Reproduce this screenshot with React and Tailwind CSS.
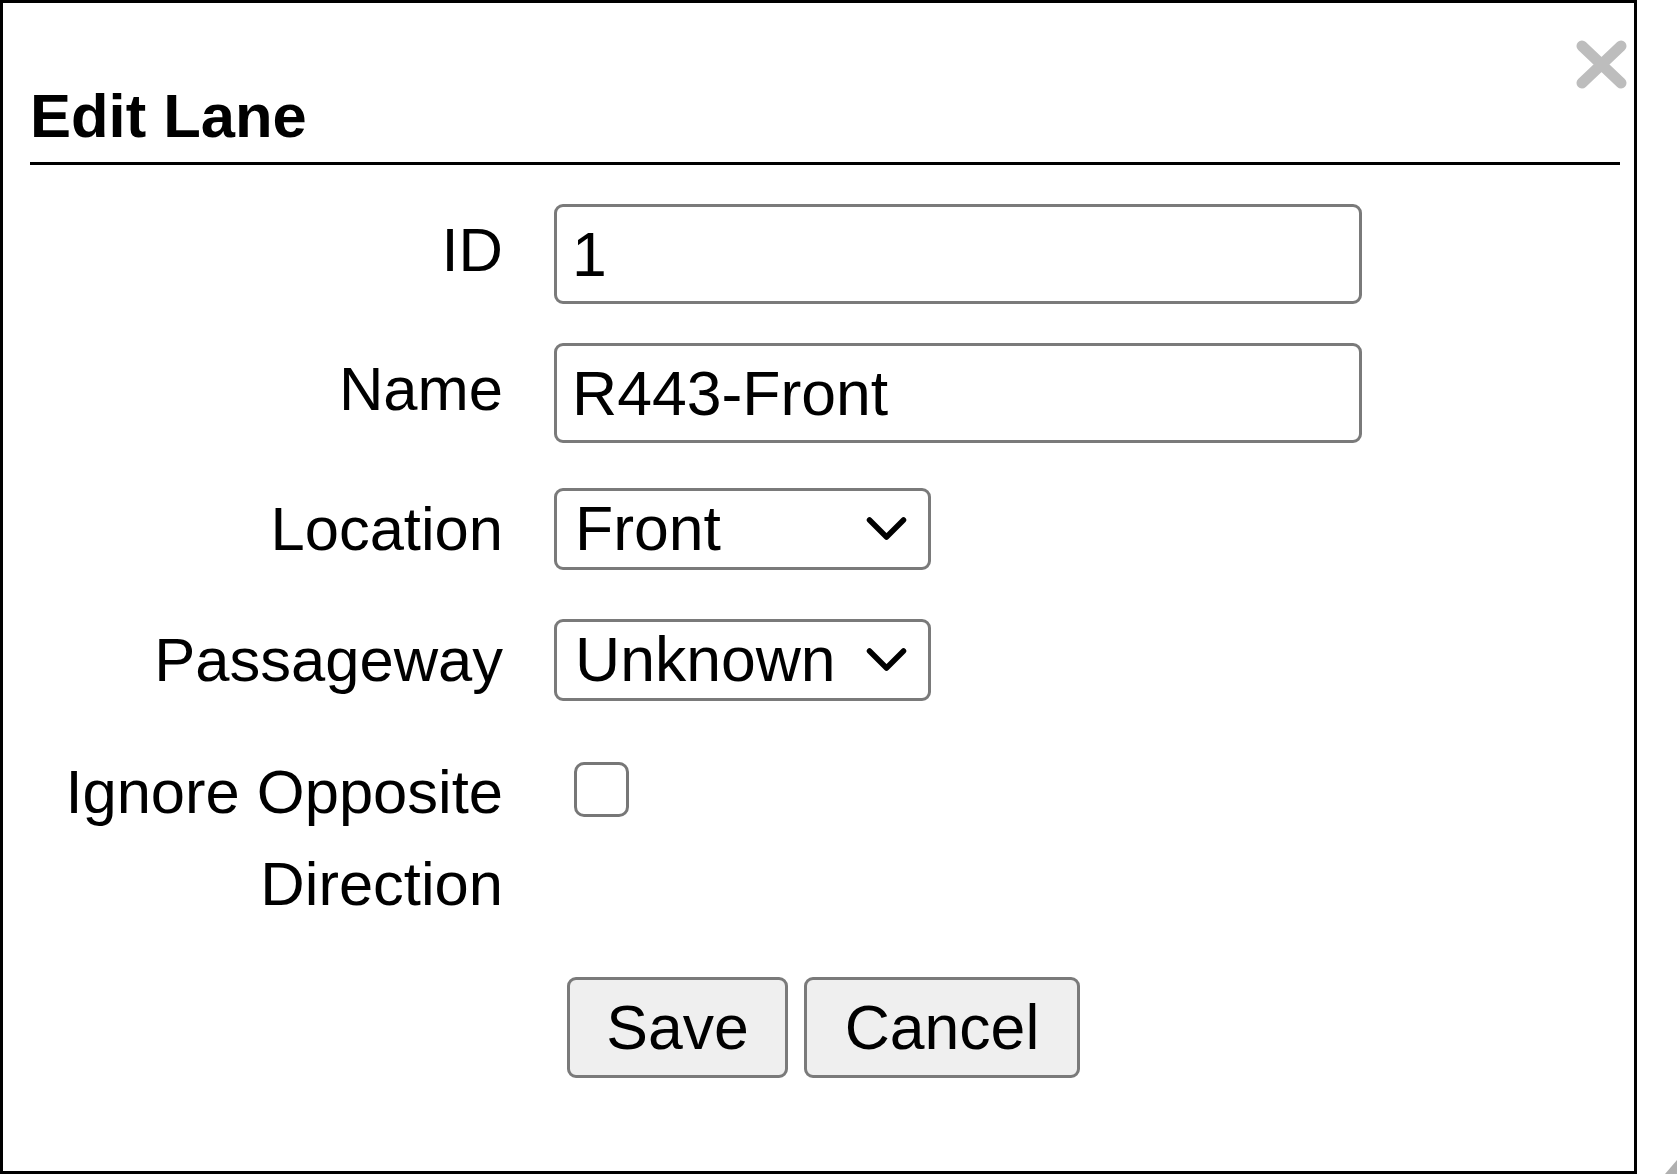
import React from "react";

const font = "font-['Liberation_Sans',Arial,sans-serif]";

function Field({ label, children, className = "", align = "items-start" }) {
    return (
        <div className={`flex ${align} ${className}`}>
            <label className="w-[473px] shrink-0 text-right text-[61.5px] leading-[92px] text-black">
                {label}
            </label>
            <div className="ml-[51px]">{children}</div>
        </div>
    );
}

function Select({ value, options }) {
    return (
        <div className="relative w-[377px] h-[82px]">
            <select
                defaultValue={value}
                className={`${font} appearance-none w-full h-full border-[3px] border-[#7a7a7a] rounded-[9px] bg-white pl-[18px] pr-[70px] text-[62.5px] leading-none text-black outline-none`}
            >
                {options.map((o) => (
                    <option key={o}>{o}</option>
                ))}
            </select>
            <svg
                className="absolute right-[24px] top-1/2 -translate-y-1/2 pointer-events-none"
                width="41"
                height="25"
                viewBox="0 0 41 25"
            >
                <path d="M3.5 3.5 L20.5 20.5 L37.5 3.5" fill="none" stroke="#000" strokeWidth="5.5" strokeLinecap="round" strokeLinejoin="round" />
            </svg>
        </div>
    );
}

export default function App() {
    return (
        <div className={`${font} w-[1677px] h-[1174px] bg-white relative overflow-hidden`}>
            <div className="relative w-[1637px] h-[1174px] border-[3px] border-black bg-white pl-[27px] pr-[14px]">
                <button className="absolute top-[36px] right-[6px] w-[53px] h-[51px]" aria-label="Close">
                    <svg width="53" height="51" viewBox="0 0 53 51">
                        <path d="M7 7 L46 44 M46 7 L7 44" stroke="#bdbdbd" strokeWidth="11" strokeLinecap="round" />
                    </svg>
                </button>

                <h2 className="mt-[77px] pb-[11px] border-b-[3px] border-black text-[61.5px] leading-[71px] font-bold text-black">
                    Edit Lane
                </h2>

                <div className="mt-[39px] flex flex-col">
                    <Field label="ID">
                        <input
                            defaultValue="1"
                            className={`${font} w-[808px] h-[100px] border-[3px] border-[#7a7a7a] rounded-[9px] pl-[15px] text-[62.5px] text-black outline-none`}
                        />
                    </Field>
                    <Field label="Name" className="mt-[39px]">
                        <input
                            defaultValue="R443-Front"
                            className={`${font} w-[808px] h-[100px] border-[3px] border-[#7a7a7a] rounded-[9px] pl-[15px] text-[62.5px] text-black outline-none`}
                        />
                    </Field>
                    <Field label="Location" className="mt-[39.5px]" align="items-center">
                        <Select value="Front" options={["Front", "Rear"]} />
                    </Field>
                    <Field label="Passageway" className="mt-[39px]" align="items-center">
                        <Select value="Unknown" options={["Unknown", "Entry", "Exit"]} />
                    </Field>
                    <Field label="Ignore Opposite Direction" className="mt-[40px]">
                        <div className="ml-[20px] mt-[16px] w-[55px] h-[55px] border-[3.5px] border-[#777777] rounded-[10px] bg-white" />
                    </Field>

                    <div className="flex mt-[47px] ml-[537px] gap-[16px]">
                        <button className="w-[221px] h-[101px] bg-[#efefef] border-[3px] border-[#7a7a7a] rounded-[9px] text-[62.5px] text-black leading-none">
                            Save
                        </button>
                        <button className="w-[276px] h-[101px] bg-[#efefef] border-[3px] border-[#7a7a7a] rounded-[9px] text-[62.5px] text-black leading-none">
                            Cancel
                        </button>
                    </div>
                </div>
            </div>

            <svg className="absolute right-0 bottom-0" width="12" height="14" viewBox="0 0 12 14">
                <path d="M12 0 L12 14 L0 14 Z" fill="#b0b0b0" />
            </svg>
        </div>
    );
}
